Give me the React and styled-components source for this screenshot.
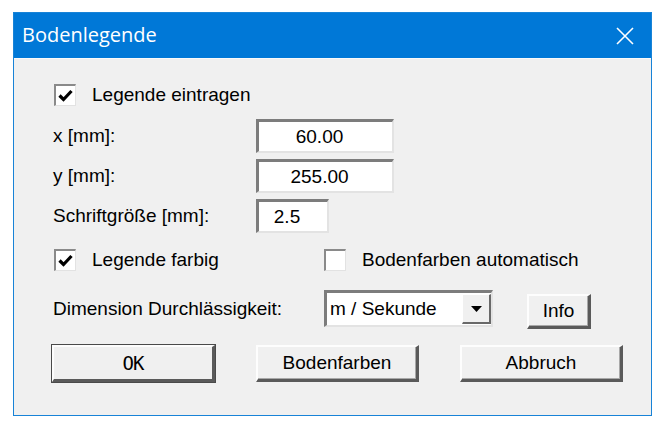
import React, { useState } from 'react';
import styled, { createGlobalStyle } from 'styled-components';

const GlobalStyle = createGlobalStyle`
  html, body {
    margin: 0;
    padding: 0;
    background: #ffffff;
  }
  body {
    font-family: "Liberation Sans", Arial, sans-serif;
  }
`;

const Desktop = styled.div`
  width: 655px;
  height: 426px;
  padding: 12px 0 0 13px;
  box-sizing: border-box;
`;

const Window = styled.div`
  width: 639px;
  height: 404px;
  box-sizing: border-box;
  border: 1px solid #1883d7;
  display: flex;
  flex-direction: column;
  background: #f0f0f0;
`;

const TitleBar = styled.div`
  height: 45px;
  flex: none;
  background: #0078d7;
  display: flex;
  align-items: center;
  justify-content: space-between;
  padding: 0 17px 0 8px;
  color: #fff;
  font-family: "Open Sans", "Noto Sans", sans-serif;
  font-size: 20px;
`;

const Title = styled.span`
  padding-bottom: 2px;
`;

const Body = styled.div`
  flex: 1;
  padding: 25px 0 0 39px;
  font-size: 19px;
  color: #000;
  border-top: 1px solid #fafafa;
`;

const Row = styled.div`
  display: flex;
  align-items: center;
  height: ${p => p.$h || 34}px;
  margin-top: ${p => p.$mt || 0}px;
  margin-left: ${p => p.$ml || 0}px;
`;

const Label = styled.span`
  width: ${p => p.$w || 203}px;
  flex: none;
  white-space: nowrap;
`;

const CheckWrap = styled.label`
  display: flex;
  align-items: center;
  gap: 16px;
  width: ${p => p.$w || 'auto'};
`;

const Box = styled.span`
  width: 22px;
  height: 22px;
  box-sizing: border-box;
  flex: none;
  background: #fff;
  border-top: 2px solid #8a8a8a;
  border-left: 2px solid #8a8a8a;
  border-right: 1px solid #e2e2e2;
  border-bottom: 1px solid #e2e2e2;
  display: flex;
  align-items: center;
  justify-content: center;
`;

const Field = styled.div`
  width: ${p => p.$w}px;
  height: ${p => p.$h || 34}px;
  box-sizing: border-box;
  background: #fff;
  border-top: 3px solid #7c7c7c;
  border-left: 3px solid #7c7c7c;
  border-right: 2px solid #e3e3e3;
  border-bottom: 2px solid #e3e3e3;
  display: flex;
  align-items: center;
  justify-content: center;
  padding-right: 12px;
`;

const Select = styled.div`
  width: 169px;
  height: 37px;
  box-sizing: border-box;
  background: #fff;
  border-top: 3px solid #7c7c7c;
  border-left: 3px solid #7c7c7c;
  border-right: 2px solid #e3e3e3;
  border-bottom: 2px solid #e3e3e3;
  display: flex;
  align-items: center;
  padding-left: 3px;
`;

const SelectText = styled.span`
  flex: 1;
  white-space: nowrap;
`;

const Arrow = styled.span`
  width: 29px;
  flex: none;
  align-self: stretch;
  margin: 1px 0;
  box-sizing: border-box;
  background: #f0f0f0;
  border-top: 1px solid #fff;
  border-left: 1px solid #fff;
  border-right: 2px solid #696969;
  border-bottom: 2px solid #696969;
  display: flex;
  align-items: center;
  justify-content: center;
`;

const Button = styled.button`
  width: ${p => p.$w || 163}px;
  height: ${p => p.$h || 37}px;
  margin-left: ${p => p.$ml || 0}px;
  margin-top: ${p => p.$mt || 0}px;
  box-sizing: border-box;
  background: #f0f0f0;
  font-family: "Liberation Sans", Arial, sans-serif;
  font-size: 19px;
  color: #000;
  padding: 0;
  border-top: 2px solid #fdfdfd;
  border-left: 2px solid #fdfdfd;
  border-right: 3px solid #5a5a5a;
  border-bottom: 3px solid #5a5a5a;
  box-shadow: ${p => (p.$default ? '0 0 0 1px #4a4a4a' : 'inset -1px -1px 0 #a8a8a8')};
  outline: none;
`;

const OkText = styled.span`
  font-family: "DejaVu Sans Mono", monospace;
  font-size: 19px;
  letter-spacing: -1px;
`;

const ButtonRow = styled.div`
  display: flex;
  margin-top: 18px;
  margin-left: -1px;
`;

const Check = () => (
  <svg width="15" height="13" viewBox="0 0 15 13">
    <path d="M1.5 6.5 L5.5 10.5 L13.5 2" fill="none" stroke="#000" strokeWidth="3.2" />
  </svg>
);

const CloseIcon = () => (
  <svg width="18" height="18" viewBox="0 0 18 18">
    <path d="M1 1 L17 17 M17 1 L1 17" stroke="#fff" strokeWidth="1.6" />
  </svg>
);

const CheckBox = ({ checked, children, onToggle, w }) => (
  <CheckWrap $w={w} onClick={onToggle}>
    <Box>{checked && <Check />}</Box>
    <span>{children}</span>
  </CheckWrap>
);

export default function App() {
  const [legend, setLegend] = useState(true);
  const [colored, setColored] = useState(true);
  const [auto, setAuto] = useState(false);

  return (
    <>
      <GlobalStyle />
      <Desktop>
        <Window>
          <TitleBar>
            <Title>Bodenlegende</Title>
            <CloseIcon />
          </TitleBar>
          <Body>
            <Row $h={22} $ml={1}>
              <CheckBox checked={legend} onToggle={() => setLegend(!legend)}>
                Legende eintragen
              </CheckBox>
            </Row>
            <Row $mt={13}>
              <Label>x [mm]:</Label>
              <Field $w={138}>60.00</Field>
            </Row>
            <Row $mt={6}>
              <Label>y [mm]:</Label>
              <Field $w={138}>255.00</Field>
            </Row>
            <Row $mt={6}>
              <Label>Schriftgröße [mm]:</Label>
              <Field $w={73}>2.5</Field>
            </Row>
            <Row $h={23} $mt={15} $ml={1}>
              <CheckBox w="270px" checked={colored} onToggle={() => setColored(!colored)}>
                Legende farbig
              </CheckBox>
              <CheckBox checked={auto} onToggle={() => setAuto(!auto)}>
                Bodenfarben automatisch
              </CheckBox>
            </Row>
            <Row $h={37} $mt={19}>
              <Label $w={271}>Dimension Durchlässigkeit:</Label>
              <Select>
                <SelectText>m / Sekunde</SelectText>
                <Arrow>
                  <svg width="11" height="6" viewBox="0 0 11 6">
                    <path d="M0 0 H11 L5.5 6 Z" fill="#000" />
                  </svg>
                </Arrow>
              </Select>
              <Button $w={64} $h={35} $ml={34} $mt={6}>Info</Button>
            </Row>
            <ButtonRow>
              <Button $default><OkText>OK</OkText></Button>
              <Button $ml={41}>Bodenfarben</Button>
              <Button $ml={41}>Abbruch</Button>
            </ButtonRow>
          </Body>
        </Window>
      </Desktop>
    </>
  );
}
